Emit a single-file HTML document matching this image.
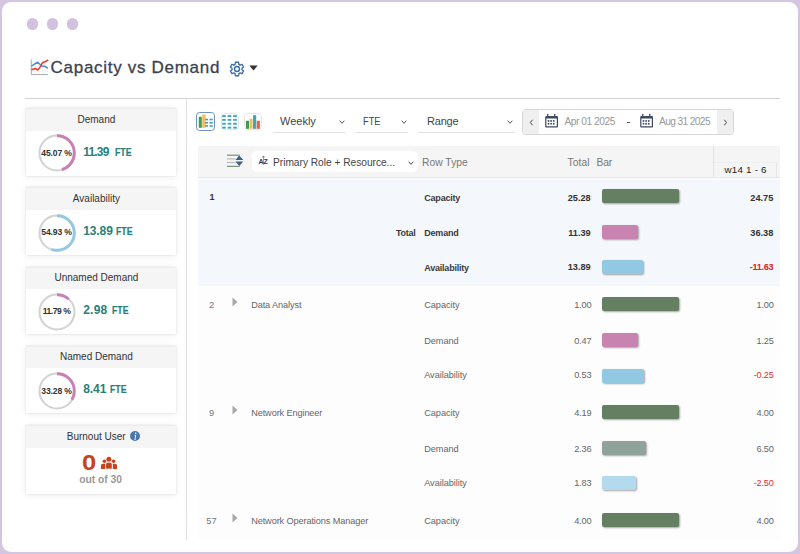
<!DOCTYPE html>
<html><head><meta charset="utf-8"><title>Capacity vs Demand</title>
<style>
html,body{margin:0;padding:0;width:800px;height:554px;overflow:hidden;background:#d4c5e1;}
body{position:relative;font-family:"Liberation Sans",sans-serif;}
.t{position:absolute;white-space:nowrap;}
.b{position:absolute;display:block;}
</style></head><body>
<div class="b" style="left:0px;top:0px;width:800px;height:554px;background:#d4c5e1;"></div>
<div class="b" style="left:2px;top:2px;width:795.8px;height:550px;background:#fff;border-radius:9px;"></div>
<div class="b" style="left:26.8px;top:18.3px;width:11.4px;height:11.4px;background:#d2c1df;border-radius:50%;"></div>
<div class="b" style="left:46.8px;top:18.3px;width:11.4px;height:11.4px;background:#d2c1df;border-radius:50%;"></div>
<div class="b" style="left:66.8px;top:18.3px;width:11.4px;height:11.4px;background:#d2c1df;border-radius:50%;"></div>
<svg class="b" style="left:30px;top:59px" width="20" height="17" viewBox="0 0 20 17">
<rect x="1.5" y="0.5" width="17" height="15" fill="#fcfcfc"/>
<g stroke="#eeeeee" stroke-width="0.5">
<line x1="1" y1="4" x2="18" y2="4"/><line x1="1" y1="8" x2="18" y2="8"/><line x1="1" y1="12" x2="18" y2="12"/>
<line x1="5" y1="1" x2="5" y2="16"/><line x1="9" y1="1" x2="9" y2="16"/><line x1="13" y1="1" x2="13" y2="16"/>
</g>
<path d="M1.25 0.5V15.6H18" fill="none" stroke="#a0a0a0" stroke-width="0.9"/>
<path d="M1.4 7.2L7.6 3.2L11.7 7L15.3 7.4L17.7 9.4" fill="none" stroke="#4a8fd0" stroke-width="1.5" stroke-linejoin="round"/>
<path d="M1.4 10.8L5.2 9.5L7.7 11L9.9 8.5L12.4 3.8L16 2.3L18.2 1" fill="none" stroke="#ef3b35" stroke-width="1.5" stroke-linejoin="round"/>
</svg>
<div class="t" style="left:50.60px;top:59.11px;font-size:17px;line-height:17px;color:#3b4350;letter-spacing:0.7px;-webkit-text-stroke:0.3px #3b4350;">Capacity vs Demand</div>
<svg class="b" style="left:227.6px;top:59.6px" width="18" height="18" viewBox="0 0 18 18"><path fill="none" stroke="#3a6ea5" stroke-width="1.35" stroke-linejoin="round" d="M7.13 4.36L7.45 2.28L10.55 2.28L10.87 4.36L12.08 5.06L14.05 4.29L15.60 6.98L13.95 8.30L13.95 9.70L15.60 11.02L14.05 13.71L12.08 12.94L10.87 13.64L10.55 15.72L7.45 15.72L7.13 13.64L5.92 12.94L3.95 13.71L2.40 11.02L4.05 9.70L4.05 8.30L2.40 6.98L3.95 4.29L5.92 5.06Z"/><circle cx="9" cy="9" r="2.5" fill="none" stroke="#3a6ea5" stroke-width="1.35"/></svg>
<svg class="b" style="left:249px;top:65px" width="9" height="6" viewBox="0 0 9 6"><path d="M0.3 0.5H8.7L4.5 5.6Z" fill="#333"/></svg>
<div class="b" style="left:25px;top:98px;width:755px;height:1px;background:#d2d2d2;"></div>
<div class="b" style="left:186px;top:99px;width:1px;height:441px;background:#e2e2e2;"></div>
<div class="b" style="left:26px;top:108.2px;width:150px;height:67.4px;background:#fff;box-shadow:0 0 2px rgba(0,0,0,.1),0 1px 7px rgba(0,0,0,.08);"></div>
<div class="b" style="left:26px;top:108.2px;width:150px;height:22.6px;background:#f5f5f5;box-sizing:border-box;border-top:1px solid #ededed;"></div>
<div class="t" style="left:26.40px;top:114.73px;font-size:10px;line-height:10px;color:#333;width:140px;text-align:center;">Demand</div>
<svg class="b" style="left:36.5px;top:133.3px" width="40" height="40" viewBox="0 0 40 40">
<circle cx="20" cy="20" r="17.5" fill="none" stroke="#d2d2d2" stroke-width="2.1"/>
<circle cx="20" cy="20" r="17.3" fill="none" stroke="#c97fb4" stroke-width="2.9" stroke-dasharray="48.99 108.70" transform="rotate(-90 20 20)"/>
</svg>
<div class="t" style="left:36.50px;top:148.92px;font-size:8.6px;line-height:8.6px;color:#333;font-weight:700;width:40px;text-align:center;letter-spacing:-0.15px;">45.07 %</div>
<div class="t" style="left:83.20px;top:145.84px;font-size:12px;line-height:12px;color:#2a8078;font-weight:700;letter-spacing:-0.8px;">11.39</div>

<div class="b" style="left:26px;top:187.4px;width:150px;height:67.4px;background:#fff;box-shadow:0 0 2px rgba(0,0,0,.1),0 1px 7px rgba(0,0,0,.08);"></div>
<div class="b" style="left:26px;top:187.4px;width:150px;height:22.6px;background:#f5f5f5;box-sizing:border-box;border-top:1px solid #ededed;"></div>
<div class="t" style="left:26.40px;top:193.94px;font-size:10px;line-height:10px;color:#333;width:140px;text-align:center;">Availability</div>
<svg class="b" style="left:36.5px;top:212.5px" width="40" height="40" viewBox="0 0 40 40">
<circle cx="20" cy="20" r="17.5" fill="none" stroke="#d2d2d2" stroke-width="2.1"/>
<circle cx="20" cy="20" r="17.3" fill="none" stroke="#93c7e2" stroke-width="2.9" stroke-dasharray="59.71 108.70" transform="rotate(-90 20 20)"/>
</svg>
<div class="t" style="left:36.50px;top:228.12px;font-size:8.6px;line-height:8.6px;color:#333;font-weight:700;width:40px;text-align:center;letter-spacing:-0.15px;">54.93 %</div>
<div class="t" style="left:83.20px;top:225.04px;font-size:12px;line-height:12px;color:#2a8078;font-weight:700;letter-spacing:-0.1px;">13.89</div>

<div class="b" style="left:26px;top:266.6px;width:150px;height:67.4px;background:#fff;box-shadow:0 0 2px rgba(0,0,0,.1),0 1px 7px rgba(0,0,0,.08);"></div>
<div class="b" style="left:26px;top:266.6px;width:150px;height:22.6px;background:#f5f5f5;box-sizing:border-box;border-top:1px solid #ededed;"></div>
<div class="t" style="left:26.40px;top:273.14px;font-size:10px;line-height:10px;color:#333;width:140px;text-align:center;">Unnamed Demand</div>
<svg class="b" style="left:36.5px;top:291.70000000000005px" width="40" height="40" viewBox="0 0 40 40">
<circle cx="20" cy="20" r="17.5" fill="none" stroke="#d2d2d2" stroke-width="2.1"/>
<circle cx="20" cy="20" r="17.3" fill="none" stroke="#c97fb4" stroke-width="2.9" stroke-dasharray="12.82 108.70" transform="rotate(-90 20 20)"/>
</svg>
<div class="t" style="left:36.50px;top:307.32px;font-size:8.6px;line-height:8.6px;color:#333;font-weight:700;width:40px;text-align:center;letter-spacing:-0.5px;">11.79 %</div>
<div class="t" style="left:83.20px;top:304.24px;font-size:12px;line-height:12px;color:#2a8078;font-weight:700;letter-spacing:0.25px;">2.98</div>

<div class="b" style="left:26px;top:345.8px;width:150px;height:67.4px;background:#fff;box-shadow:0 0 2px rgba(0,0,0,.1),0 1px 7px rgba(0,0,0,.08);"></div>
<div class="b" style="left:26px;top:345.8px;width:150px;height:22.6px;background:#f5f5f5;box-sizing:border-box;border-top:1px solid #ededed;"></div>
<div class="t" style="left:26.40px;top:352.34px;font-size:10px;line-height:10px;color:#333;width:140px;text-align:center;">Named Demand</div>
<svg class="b" style="left:36.5px;top:370.90000000000003px" width="40" height="40" viewBox="0 0 40 40">
<circle cx="20" cy="20" r="17.5" fill="none" stroke="#d2d2d2" stroke-width="2.1"/>
<circle cx="20" cy="20" r="17.3" fill="none" stroke="#c97fb4" stroke-width="2.9" stroke-dasharray="36.18 108.70" transform="rotate(-90 20 20)"/>
</svg>
<div class="t" style="left:36.50px;top:386.52px;font-size:8.6px;line-height:8.6px;color:#333;font-weight:700;width:40px;text-align:center;letter-spacing:-0.15px;">33.28 %</div>
<div class="t" style="left:83.20px;top:383.44px;font-size:12px;line-height:12px;color:#2a8078;font-weight:700;letter-spacing:-0.05px;">8.41</div>

<div class="t" style="left:114.60px;top:147.78px;font-size:10.3px;line-height:10.3px;color:#2a8078;font-weight:700;transform:scaleX(0.85);transform-origin:0 0;-webkit-text-stroke:0.2px #2a8078;">FTE</div>
<div class="t" style="left:116.20px;top:226.98px;font-size:10.3px;line-height:10.3px;color:#2a8078;font-weight:700;transform:scaleX(0.85);transform-origin:0 0;-webkit-text-stroke:0.2px #2a8078;">FTE</div>
<div class="t" style="left:111.90px;top:306.18px;font-size:10.3px;line-height:10.3px;color:#2a8078;font-weight:700;transform:scaleX(0.85);transform-origin:0 0;-webkit-text-stroke:0.2px #2a8078;">FTE</div>
<div class="t" style="left:110.40px;top:385.38px;font-size:10.3px;line-height:10.3px;color:#2a8078;font-weight:700;transform:scaleX(0.85);transform-origin:0 0;-webkit-text-stroke:0.2px #2a8078;">FTE</div>
<div class="b" style="left:26px;top:425.0px;width:150px;height:68.6px;background:#fff;box-shadow:0 0 2px rgba(0,0,0,.1),0 1px 7px rgba(0,0,0,.08);"></div>
<div class="b" style="left:26px;top:425.0px;width:150px;height:22.6px;background:#f5f5f5;box-sizing:border-box;border-top:1px solid #ededed;"></div>
<div class="t" style="left:26.20px;top:431.54px;font-size:10px;line-height:10px;color:#333;width:140px;text-align:center;">Burnout User</div>
<svg class="b" style="left:129.9px;top:430.7px" width="10" height="10" viewBox="0 0 10 10"><circle cx="5" cy="5" r="5" fill="#4a78ad"/><circle cx="5.65" cy="2.3" r="0.85" fill="#fff"/><path d="M4.6 3.9H6.2L5.4 7.9H6.1L6 8.5H3.9L4.05 7.9H4.6L5.2 4.5H4.5Z" fill="#fff"/></svg>
<div class="t" style="left:81.50px;top:451.55px;font-size:21.8px;line-height:21.8px;color:#c8421b;font-weight:700;transform:scaleX(1.17);transform-origin:0 0;">0</div>
<svg class="b" style="left:101px;top:456px" width="17" height="14" viewBox="0 0 17 14">
<g fill="#c8421b">
<circle cx="7.9" cy="3.3" r="2.5"/><circle cx="3.4" cy="5.3" r="1.8"/><circle cx="12.6" cy="5.3" r="1.8"/>
<path d="M0 13V9.6A1.9 1.9 0 0 1 1.9 7.7H4.2V13Z"/><path d="M11.8 13V7.7H14.1A1.9 1.9 0 0 1 16 9.6V13Z"/>
</g>
<path d="M4.6 13V8.6A2.4 2.4 0 0 1 7 6.2H8.8A2.4 2.4 0 0 1 11.2 8.6V13Z" fill="#c8421b" stroke="#fff" stroke-width="0.7"/>
</svg>
<div class="t" style="left:70.60px;top:474.88px;font-size:10.3px;line-height:10.3px;color:#999;font-weight:700;width:60px;text-align:center;">out of 30</div>
<div class="b" style="left:196.2px;top:112.2px;width:18.8px;height:18.4px;box-sizing:border-box;border:1.6px solid #6e92c0;border-radius:3.5px;background:#fff;"></div>
<svg class="b" style="left:198px;top:114px" width="15" height="15" viewBox="0 0 15 15">
<rect x="0.8" y="2.8" width="3" height="11" fill="#3f9c4e"/>
<rect x="4.2" y="0.5" width="3.3" height="13.3" fill="#f0bd62"/>
<g fill="#3aa7bf"><rect x="7" y="4.7" width="3" height="1.6"/><rect x="11.5" y="4.7" width="3.3" height="1.6"/>
<rect x="7" y="8" width="3" height="1.6"/><rect x="11.5" y="8" width="3.3" height="1.6"/>
<rect x="7" y="11.2" width="3" height="1.6"/><rect x="11.5" y="11.2" width="3.3" height="1.6"/></g>
</svg>
<div class="b" style="left:220.5px;top:113.4px;width:18.6px;height:17px;box-sizing:border-box;border:1px solid #e6e6e6;border-radius:4px;background:#fff;"></div>
<svg class="b" style="left:221px;top:114px" width="18" height="16" viewBox="0 0 18 16"><g fill="#3aa7bf">
<rect x="1.2" y="1.1" width="3.6" height="1.9"/><rect x="6.7" y="1.1" width="3.6" height="1.9"/><rect x="12.2" y="1.1" width="3.6" height="1.9"/>
<rect x="1.2" y="4.9" width="3.6" height="1.9"/><rect x="6.7" y="4.9" width="3.6" height="1.9"/><rect x="12.2" y="4.9" width="3.6" height="1.9"/>
<rect x="1.2" y="8.8" width="3.6" height="1.9"/><rect x="6.7" y="8.8" width="3.6" height="1.9"/><rect x="12.2" y="8.8" width="3.6" height="1.9"/>
<rect x="1.2" y="12.7" width="3.6" height="1.9"/><rect x="6.7" y="12.7" width="3.6" height="1.9"/><rect x="12.2" y="12.7" width="3.6" height="1.9"/>
</g></svg>
<div class="b" style="left:244px;top:113.4px;width:18px;height:17px;box-sizing:border-box;border:1px solid #e6e6e6;border-radius:4px;background:#fff;"></div>
<svg class="b" style="left:245px;top:114px" width="16" height="16" viewBox="0 0 16 16">
<rect x="1" y="6.8" width="3" height="8" fill="#3f9c4e"/>
<rect x="4.5" y="4.8" width="3" height="10" fill="#f0bd62"/>
<rect x="8" y="1.2" width="3.2" height="13.6" fill="#3aa7bf"/>
<rect x="11.7" y="6.8" width="3.2" height="8" fill="#e4614a"/>
</svg>
<div class="b" style="left:272.6px;top:132px;width:73.39999999999998px;height:1.3px;border-radius:1px;background:#e2e2e2;"></div>
<svg class="b" style="left:339px;top:120px" width="6" height="4" viewBox="0 0 6 4"><path d="M0.7 0.7L3.0 3.3L5.3 0.7" fill="none" stroke="#555" stroke-width="1"/></svg>
<div class="b" style="left:355.4px;top:132px;width:52.60000000000002px;height:1.3px;border-radius:1px;background:#e2e2e2;"></div>
<svg class="b" style="left:401.4px;top:120px" width="6" height="4" viewBox="0 0 6 4"><path d="M0.7 0.7L3.0 3.3L5.3 0.7" fill="none" stroke="#555" stroke-width="1"/></svg>
<div class="b" style="left:418px;top:132px;width:97.39999999999998px;height:1.3px;border-radius:1px;background:#e2e2e2;"></div>
<svg class="b" style="left:507px;top:120px" width="6" height="4" viewBox="0 0 6 4"><path d="M0.7 0.7L3.0 3.3L5.3 0.7" fill="none" stroke="#555" stroke-width="1"/></svg>
<div class="t" style="left:280.00px;top:115.89px;font-size:11px;line-height:11px;color:#444;">Weekly</div>
<div class="t" style="left:363.00px;top:115.89px;font-size:11px;line-height:11px;color:#444;transform:scaleX(0.84);transform-origin:0 0;">FTE</div>
<div class="t" style="left:427.00px;top:115.89px;font-size:11px;line-height:11px;color:#444;letter-spacing:-0.2px;">Range</div>
<div class="b" style="left:522.4px;top:109.2px;width:211.4px;height:25.4px;box-sizing:border-box;border:1px solid #d6d6d6;border-radius:4px;background:#fff;overflow:hidden;"></div>
<div class="b" style="left:523.4px;top:110.2px;width:16px;height:23.4px;background:#efefef;border-radius:3px 0 0 3px;"></div>
<div class="b" style="left:717.4px;top:110.2px;width:15.4px;height:23.4px;background:#efefef;border-radius:0 3px 3px 0;"></div>
<svg class="b" style="left:529px;top:118.8px" width="5" height="7" viewBox="0 0 5 7"><path d="M3.5 0.8L1.3 3.5L3.5 6.2" fill="none" stroke="#444" stroke-width="1"/></svg>
<svg class="b" style="left:722.8px;top:118.8px" width="5" height="7" viewBox="0 0 5 7"><path d="M1.3 0.8L3.5 3.5L1.3 6.2" fill="none" stroke="#444" stroke-width="1"/></svg>
<svg class="b" style="left:544px;top:113px" width="15" height="15" viewBox="0 0 15 15"><g fill="#3d4a60">
<path fill-rule="evenodd" d="M2.4 3H12.8A1.2 1.2 0 0 1 14 4.2V13.4A1 1 0 0 1 13 14.4H2.2A1 1 0 0 1 1.2 13.4V4.2A1.2 1.2 0 0 1 2.4 3ZM2.4 5.6V13.3H12.8V5.6Z"/>
<rect x="3.1" y="0.8" width="1.2" height="2.6" rx=".4"/><rect x="10.1" y="0.8" width="1.2" height="2.6" rx=".4"/>
<rect x="3.7" y="7.1" width="1.6" height="1.7"/><rect x="6.3" y="7.1" width="1.6" height="1.7"/><rect x="8.9" y="7.1" width="1.6" height="1.7"/>
<rect x="3.7" y="9.9" width="1.6" height="1.7"/><rect x="6.3" y="9.9" width="1.6" height="1.7"/><rect x="8.9" y="9.9" width="1.6" height="1.7"/>
</g></svg>
<svg class="b" style="left:638.5px;top:113px" width="15" height="15" viewBox="0 0 15 15"><g fill="#3d4a60">
<path fill-rule="evenodd" d="M2.4 3H12.8A1.2 1.2 0 0 1 14 4.2V13.4A1 1 0 0 1 13 14.4H2.2A1 1 0 0 1 1.2 13.4V4.2A1.2 1.2 0 0 1 2.4 3ZM2.4 5.6V13.3H12.8V5.6Z"/>
<rect x="3.1" y="0.8" width="1.2" height="2.6" rx=".4"/><rect x="10.1" y="0.8" width="1.2" height="2.6" rx=".4"/>
<rect x="3.7" y="7.1" width="1.6" height="1.7"/><rect x="6.3" y="7.1" width="1.6" height="1.7"/><rect x="8.9" y="7.1" width="1.6" height="1.7"/>
<rect x="3.7" y="9.9" width="1.6" height="1.7"/><rect x="6.3" y="9.9" width="1.6" height="1.7"/><rect x="8.9" y="9.9" width="1.6" height="1.7"/>
</g></svg>
<div class="t" style="left:564.40px;top:116.77px;font-size:10.2px;line-height:10.2px;color:#999;letter-spacing:-0.45px;">Apr 01 2025</div>
<div class="t" style="left:659.00px;top:116.77px;font-size:10.2px;line-height:10.2px;color:#999;letter-spacing:-0.62px;">Aug 31 2025</div>
<div class="b" style="left:627px;top:121.6px;width:3.2px;height:1.2px;background:#555;"></div>
<div class="b" style="left:197.5px;top:146px;width:582.5px;height:31.4px;background:#f5f5f5;"></div>
<div class="b" style="left:197.5px;top:177.2px;width:582.5px;height:1px;background:#e8e8e8;"></div>
<svg class="b" style="left:226px;top:153px" width="19" height="15" viewBox="0 0 19 15">
<g stroke-width="1.25"><line x1="1" y1="2.2" x2="13.8" y2="2.2" stroke="#7d957d"/><line x1="1" y1="5.9" x2="9.4" y2="5.9" stroke="#bdbdbd"/><line x1="1" y1="9.5" x2="9.4" y2="9.5" stroke="#bdbdbd"/><line x1="1" y1="13.4" x2="13.8" y2="13.4" stroke="#7d957d"/></g>
<path d="M9.4 6.9L13.3 2.5L17.25 6.9Z M9.4 8.4L13.3 13.1L17.25 8.4Z" fill="#3d5f8c"/>
</svg>
<div class="b" style="left:252px;top:151.2px;width:166px;height:21.3px;background:#fff;border-radius:5px;"></div>
<div class="t" style="left:258.60px;top:157.87px;font-size:7px;line-height:7px;color:#3a3a3a;font-weight:700;letter-spacing:-0.2px;">A</div>
<div class="t" style="left:263.40px;top:157.87px;font-size:7px;line-height:7px;color:#3a3a3a;font-weight:700;">Z</div>
<svg class="b" style="left:261px;top:155px" width="5" height="11" viewBox="0 0 5 11"><path d="M2.5 1V10M1.2 2.6L2.5 0.9L3.8 2.6" fill="none" stroke="#555" stroke-width=".6"/></svg>
<div class="t" style="left:273.00px;top:157.57px;font-size:10.2px;line-height:10.2px;color:#444;letter-spacing:-0.02px;">Primary Role + Resource...</div>
<svg class="b" style="left:408px;top:160.5px" width="6" height="4" viewBox="0 0 6 4"><path d="M0.7 0.7L3.0 3.3L5.3 0.7" fill="none" stroke="#444" stroke-width="1"/></svg>
<div class="t" style="left:421.90px;top:158.28px;font-size:10.3px;line-height:10.3px;color:#777;letter-spacing:0.05px;">Row Type</div>
<div class="t" style="left:567.50px;top:158.08px;font-size:10.3px;line-height:10.3px;color:#777;letter-spacing:0.05px;">Total</div>
<div class="t" style="left:596.60px;top:158.08px;font-size:10.3px;line-height:10.3px;color:#777;letter-spacing:-0.2px;">Bar</div>
<div class="b" style="left:712.6px;top:146px;width:1.4px;height:31.4px;background:#e2e2e2;"></div>
<div class="b" style="left:714px;top:161.6px;width:62px;height:1px;border-top:1px dotted #e9e9e9;height:0;"></div>
<div class="b" style="left:776px;top:162px;width:1px;height:15.4px;background:#e6e6e6;"></div>
<div class="t" style="left:724.60px;top:165.10px;font-size:9.8px;line-height:9.8px;color:#222;letter-spacing:0.2px;">w14 1 - 6</div>
<div class="b" style="left:198px;top:178.2px;width:582px;height:108px;background:#f4f7fc;"></div>
<div class="b" style="left:198px;top:286.2px;width:582px;height:253.8px;background:#fdfdfd;"></div>
<div class="b" style="left:198px;top:178.2px;width:582px;height:1.8px;background:#f9fafc;"></div>
<div class="t" style="left:209.60px;top:192.98px;font-size:9px;line-height:9px;color:#333;font-weight:700;">1</div>
<div class="t" style="left:355.40px;top:228.98px;font-size:9px;line-height:9px;color:#3a3a3a;font-weight:700;width:60px;text-align:right;letter-spacing:-0.3px;">Total</div>
<div class="t" style="left:424.30px;top:194.18px;font-size:9px;line-height:9px;color:#3a3a3a;font-weight:700;letter-spacing:-0.22px;">Capacity</div>
<div class="t" style="left:540.70px;top:194.01px;font-size:9.2px;line-height:9.2px;color:#333;font-weight:700;width:50px;text-align:right;">25.28</div>
<div class="t" style="left:723.30px;top:194.01px;font-size:9.2px;line-height:9.2px;color:#333;font-weight:700;width:50px;text-align:right;">24.75</div>
<div class="b" style="left:601.5px;top:189.25px;width:77.5px;height:14.1px;background:#657f63;border-radius:2px;box-shadow:1px 1px 2px rgba(0,0,0,.35);"></div>
<div class="t" style="left:424.30px;top:228.98px;font-size:9px;line-height:9px;color:#3a3a3a;font-weight:700;letter-spacing:-0.22px;">Demand</div>
<div class="t" style="left:540.70px;top:228.81px;font-size:9.2px;line-height:9.2px;color:#333;font-weight:700;width:50px;text-align:right;">11.39</div>
<div class="t" style="left:723.30px;top:228.81px;font-size:9.2px;line-height:9.2px;color:#333;font-weight:700;width:50px;text-align:right;">36.38</div>
<div class="b" style="left:601.5px;top:225.15px;width:36.1px;height:14.1px;background:#c883b0;border-radius:2px;box-shadow:1px 1px 2px rgba(0,0,0,.35);"></div>
<div class="t" style="left:424.30px;top:263.58px;font-size:9px;line-height:9px;color:#3a3a3a;font-weight:700;letter-spacing:-0.22px;">Availability</div>
<div class="t" style="left:540.70px;top:263.41px;font-size:9.2px;line-height:9.2px;color:#333;font-weight:700;width:50px;text-align:right;">13.89</div>
<div class="t" style="left:723.30px;top:263.41px;font-size:9.2px;line-height:9.2px;color:#e02020;font-weight:700;width:50px;text-align:right;letter-spacing:-0.35px;">-11.63</div>
<div class="b" style="left:601.5px;top:260.4px;width:41.9px;height:14.1px;background:#93c8e3;border-radius:2px;box-shadow:1px 1px 2px rgba(0,0,0,.35);"></div>
<div class="t" style="left:196.50px;top:301.03px;font-size:9.3px;line-height:9.3px;color:#777;width:30px;text-align:center;">2</div>
<svg class="b" style="left:232px;top:297.09999999999997px" width="6" height="10" viewBox="0 0 6 10"><path d="M0.5 0.5L5.5 5L0.5 9.5Z" fill="#a8a8a8"/></svg>
<div class="t" style="left:251.20px;top:301.11px;font-size:9.2px;line-height:9.2px;color:#666;letter-spacing:-0.12px;">Data Analyst</div>
<div class="t" style="left:424.20px;top:301.11px;font-size:9.2px;line-height:9.2px;color:#666;letter-spacing:-0.05px;">Capacity</div>
<div class="t" style="left:541.30px;top:301.11px;font-size:9.2px;line-height:9.2px;color:#666;width:50px;text-align:right;letter-spacing:-0.2px;">1.00</div>
<div class="t" style="left:723.60px;top:301.11px;font-size:9.2px;line-height:9.2px;color:#666;width:50px;text-align:right;letter-spacing:-0.2px;">1.00</div>
<div class="b" style="left:601.5px;top:297.2px;width:77.5px;height:14.1px;background:#657f63;border-radius:2px;box-shadow:1px 1px 2px rgba(0,0,0,.35);"></div>
<div class="t" style="left:424.20px;top:336.91px;font-size:9.2px;line-height:9.2px;color:#666;letter-spacing:-0.05px;">Demand</div>
<div class="t" style="left:541.30px;top:336.91px;font-size:9.2px;line-height:9.2px;color:#666;width:50px;text-align:right;letter-spacing:-0.2px;">0.47</div>
<div class="t" style="left:723.60px;top:336.91px;font-size:9.2px;line-height:9.2px;color:#666;width:50px;text-align:right;letter-spacing:-0.2px;">1.25</div>
<div class="b" style="left:601.5px;top:332.65px;width:36.4px;height:14.1px;background:#c883b0;border-radius:2px;box-shadow:1px 1px 2px rgba(0,0,0,.35);"></div>
<div class="t" style="left:424.20px;top:370.91px;font-size:9.2px;line-height:9.2px;color:#666;letter-spacing:-0.05px;">Availability</div>
<div class="t" style="left:541.30px;top:370.91px;font-size:9.2px;line-height:9.2px;color:#666;width:50px;text-align:right;letter-spacing:-0.2px;">0.53</div>
<div class="t" style="left:723.60px;top:370.91px;font-size:9.2px;line-height:9.2px;color:#e03030;width:50px;text-align:right;letter-spacing:-0.2px;">-0.25</div>
<div class="b" style="left:601.5px;top:368.5px;width:42.3px;height:14.1px;background:#93c8e3;border-radius:2px;box-shadow:1px 1px 2px rgba(0,0,0,.35);"></div>
<div class="t" style="left:196.50px;top:408.73px;font-size:9.3px;line-height:9.3px;color:#777;width:30px;text-align:center;">9</div>
<svg class="b" style="left:232px;top:404.8px" width="6" height="10" viewBox="0 0 6 10"><path d="M0.5 0.5L5.5 5L0.5 9.5Z" fill="#a8a8a8"/></svg>
<div class="t" style="left:251.20px;top:408.81px;font-size:9.2px;line-height:9.2px;color:#666;letter-spacing:-0.12px;">Network Engineer</div>
<div class="t" style="left:424.20px;top:408.81px;font-size:9.2px;line-height:9.2px;color:#666;letter-spacing:-0.05px;">Capacity</div>
<div class="t" style="left:541.30px;top:408.81px;font-size:9.2px;line-height:9.2px;color:#666;width:50px;text-align:right;letter-spacing:-0.2px;">4.19</div>
<div class="t" style="left:723.60px;top:408.81px;font-size:9.2px;line-height:9.2px;color:#666;width:50px;text-align:right;letter-spacing:-0.2px;">4.00</div>
<div class="b" style="left:601.5px;top:405.0px;width:77.5px;height:14.1px;background:#657f63;border-radius:2px;box-shadow:1px 1px 2px rgba(0,0,0,.35);"></div>
<div class="t" style="left:424.20px;top:444.71px;font-size:9.2px;line-height:9.2px;color:#666;letter-spacing:-0.05px;">Demand</div>
<div class="t" style="left:541.30px;top:444.71px;font-size:9.2px;line-height:9.2px;color:#666;width:50px;text-align:right;letter-spacing:-0.2px;">2.36</div>
<div class="t" style="left:723.60px;top:444.71px;font-size:9.2px;line-height:9.2px;color:#666;width:50px;text-align:right;letter-spacing:-0.2px;">6.50</div>
<div class="b" style="left:601.5px;top:441.0px;width:44.2px;height:14.1px;background:#8fa39b;border-radius:2px;box-shadow:1px 1px 2px rgba(0,0,0,.35);"></div>
<div class="t" style="left:424.20px;top:479.31px;font-size:9.2px;line-height:9.2px;color:#666;letter-spacing:-0.05px;">Availability</div>
<div class="t" style="left:541.30px;top:479.31px;font-size:9.2px;line-height:9.2px;color:#666;width:50px;text-align:right;letter-spacing:-0.2px;">1.83</div>
<div class="t" style="left:723.60px;top:479.31px;font-size:9.2px;line-height:9.2px;color:#e03030;width:50px;text-align:right;letter-spacing:-0.2px;">-2.50</div>
<div class="b" style="left:601.5px;top:475.9px;width:34.0px;height:14.1px;background:#b4daf0;border-radius:2px;box-shadow:1px 1px 2px rgba(0,0,0,.35);"></div>
<div class="t" style="left:196.50px;top:516.73px;font-size:9.3px;line-height:9.3px;color:#777;width:30px;text-align:center;">57</div>
<svg class="b" style="left:232px;top:512.8000000000001px" width="6" height="10" viewBox="0 0 6 10"><path d="M0.5 0.5L5.5 5L0.5 9.5Z" fill="#a8a8a8"/></svg>
<div class="t" style="left:251.20px;top:516.81px;font-size:9.2px;line-height:9.2px;color:#666;letter-spacing:-0.12px;">Network Operations Manager</div>
<div class="t" style="left:424.20px;top:516.81px;font-size:9.2px;line-height:9.2px;color:#666;letter-spacing:-0.05px;">Capacity</div>
<div class="t" style="left:541.30px;top:516.81px;font-size:9.2px;line-height:9.2px;color:#666;width:50px;text-align:right;letter-spacing:-0.2px;">4.00</div>
<div class="t" style="left:723.60px;top:516.81px;font-size:9.2px;line-height:9.2px;color:#666;width:50px;text-align:right;letter-spacing:-0.2px;">4.00</div>
<div class="b" style="left:601.5px;top:513.0px;width:77.5px;height:14.1px;background:#657f63;border-radius:2px;box-shadow:1px 1px 2px rgba(0,0,0,.35);"></div>
</body></html>
